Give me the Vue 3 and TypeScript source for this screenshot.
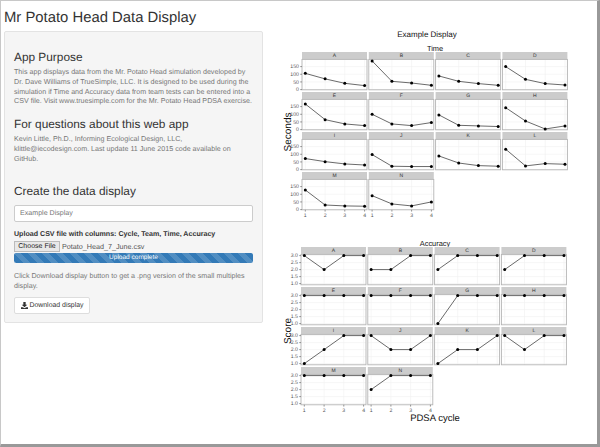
<script setup lang="ts">
interface Facet { name: string; values: number[] }
interface Chart {
  title: string
  yLabel: string
  labelY: number
  left: number
  top: number
  ticks: number[]
  tickFmt: (v: number) => string
  yZero: number
  yScale: number
  facets: Facet[]
}

const names = 'ABCDEFGHIJKLMN'.split('')
const timeData = [
  [106, 70, 41, 26], [187, 54, 43, 28], [89, 54, 39, 28], [150, 67, 39, 30],
  [167, 65, 37, 26], [100, 37, 26, 46], [96, 28, 24, 20], [143, 56, 4, 24],
  [72, 52, 37, 30], [98, 22, 20, 20], [89, 43, 26, 22], [133, 24, 39, 35],
  [128, 30, 24, 22], [91, 37, 24, 50],
]
const accuracyData = [
  [3, 2, 3, 3], [2, 2, 3, 3], [2, 3, 3, 3], [2, 3, 3, 3],
  [3, 3, 3, 3], [3, 3, 3, 3], [1, 3, 3, 3], [3, 3, 3, 3],
  [1, 2, 3, 3], [3, 2, 2, 3], [1, 2, 2, 3], [3, 2, 3, 3],
  [3, 3, 3, 3], [2, 3, 3, 3],
]

const toFacets = (d: number[][]): Facet[] => d.map((values, i) => ({ name: names[i], values }))

const charts: Chart[] = [
  {
    title: 'Time', yLabel: 'Seconds', labelY: 132, left: 302, top: 52, ticks: [0, 50, 100, 150],
    tickFmt: (v) => String(v), yZero: 37.6, yScale: 0.1533, facets: toFacets(timeData),
  },
  {
    title: 'Accuracy', yLabel: 'Score', labelY: 331, left: 301, top: 247, ticks: [1, 1.5, 2, 2.5, 3],
    tickFmt: (v) => v.toFixed(1), yZero: 36.6, yScale: 14, facets: toFacets(accuracyData),
  },
]

const panelW = 65
const pitchX = 66.8
const pitchY = 40
const stripH = 7.4
const panelH = 30.4
const xs = [3.3, 23.1, 42.8, 62.6]

const col = (i: number) => i % 4
const row = (i: number) => Math.floor(i / 4)
const facetX = (c: Chart, i: number) => c.left + col(i) * pitchX
const facetY = (c: Chart, i: number) => c.top + row(i) * pitchY
const pointY = (c: Chart, v: number) => c.yZero - (c.title === 'Time' ? v : v - 1) * c.yScale
const linePoints = (c: Chart, f: Facet) =>
  f.values.map((v, k) => `${xs[k]},${pointY(c, v)}`).join(' ')
const hasXTicks = (i: number) => i >= 12
const isLeft = (i: number) => i % 4 === 0
const minor = (c: Chart) => c.ticks.map((t) => pointY(c, t))
</script>

<template>
  <div class="frame">
    <div class="page">
      <h1 class="title">Mr Potato Head Data Display</h1>
      <div class="columns">
        <aside class="well">
          <h3 class="h3 first">App Purpose</h3>
          <p class="text">
            This app displays data from the Mr. Potato Head simulation developed by<br />
            Dr. Dave Williams of TrueSimple, LLC. It is designed to be used during the<br />
            simulation if Time and Accuracy data from team tests can be entered into a<br />
            CSV file. Visit www.truesimple.com for the Mr. Potato Head PDSA exercise.
          </p>
          <h3 class="h3 second">For questions about this web app</h3>
          <p class="text">
            Kevin Little, Ph.D., Informing Ecological Design, LLC,<br />
            klittle@iecodesign.com. Last update 11 June 2015 code available on<br />
            GitHub.
          </p>
          <h3 class="h3 third">Create the data display</h3>
          <div class="input">Example Display</div>
          <label class="label">Upload CSV file with columns: Cycle, Team, Time, Accuracy</label>
          <div class="file">
            <span class="choose">Choose File</span>
            <span class="filename">Potato_Head_7_June.csv</span>
          </div>
          <div class="progress">Upload complete</div>
          <p class="text hint">
            Click Download display button to get a .png version of the small multiples<br />
            display.
          </p>
          <div class="btn">
            <svg class="dl" viewBox="0 0 12 12" width="7" height="7">
              <path d="M4 0h4v4.5h2.8L6 9 1.2 4.5H4z" fill="#333" />
              <path d="M0 9h3l3 1.6L9 9h3v3H0z" fill="#333" />
            </svg>
            <span>Download display</span>
          </div>
        </aside>

        <svg class="plots" viewBox="270 20 327 410" width="327" height="410">
          <text x="427" y="37" class="main">Example Display</text>
          <g v-for="c in charts" :key="c.title">
            <text x="435" :y="c.top - 0.9" class="sub">{{ c.title }}</text>
            <text
              class="axis y-axis"
              :transform="`translate(290.5 ${c.labelY}) rotate(-90)`"
            >{{ c.yLabel }}</text>
            <g
              v-for="(f, i) in c.facets"
              :key="f.name"
              :transform="`translate(${facetX(c, i)} ${facetY(c, i)})`"
            >
              <rect :width="panelW" :height="stripH" class="strip" />
              <text :x="panelW / 2" y="5.3" class="strip-label">{{ f.name }}</text>
              <g :transform="`translate(0 ${stripH})`">
                <rect :width="panelW" :height="panelH" fill="#fff" />
                <line
                  v-for="y in minor(c)"
                  :key="y"
                  x1="0"
                  :x2="panelW"
                  :y1="y - stripH"
                  :y2="y - stripH"
                  class="grid"
                />
                <line
                  v-for="x in xs"
                  :key="x"
                  :x1="x"
                  :x2="x"
                  y1="0"
                  :y2="panelH"
                  class="grid"
                />
                <rect :width="panelW" :height="panelH" class="border" />
                <g :transform="`translate(0 ${-stripH})`">
                  <polyline :points="linePoints(c, f)" class="series" />
                  <circle
                    v-for="(v, k) in f.values"
                    :key="k"
                    :cx="xs[k]"
                    :cy="pointY(c, v)"
                    r="1.5"
                    fill="#000"
                  />
                  <template v-if="isLeft(i)">
                    <g v-for="t in c.ticks" :key="t">
                      <line x1="-1.8" x2="0" :y1="pointY(c, t)" :y2="pointY(c, t)" class="tick" />
                      <text x="-3" :y="pointY(c, t) + 1.8" class="tick-label end">{{ c.tickFmt(t) }}</text>
                    </g>
                  </template>
                  <template v-if="hasXTicks(i)">
                    <g v-for="(x, k) in xs" :key="x">
                      <line :x1="x" :x2="x" :y1="stripH + panelH" :y2="stripH + panelH + 1.8" class="tick" />
                      <text :x="x" :y="stripH + panelH + 7.4" class="tick-label mid">{{ k + 1 }}</text>
                    </g>
                  </template>
                </g>
              </g>
            </g>
          </g>
          <text x="435" y="421" class="axis">PDSA cycle</text>
        </svg>
      </div>
    </div>
  </div>
</template>

<style>
html, body { margin: 0; background: #fff; }
</style>

<style scoped>
.frame {
  width: 600px;
  height: 447px;
  box-sizing: border-box;
  border-top: 1px solid #c8c8c8;
  border-left: 1px solid #c8c8c8;
  border-right: 3px solid #999;
  border-bottom: 3px solid #999;
  overflow: hidden;
  background: #fff;
  font-family: "Liberation Sans", Arial, sans-serif;
  text-rendering: geometricPrecision;
  color: #333;
}
.page { padding: 0 0 0 3px; }
.title {
  margin: 0;
  padding-top: 9px;
  font-size: 14.85px;
  line-height: 17px;
  font-weight: 400;
  height: 21px;
  color: #333;
}
.columns { display: flex; align-items: flex-start; }
.well {
  width: 259px;
  height: 292px;
  flex: none;
  box-sizing: border-box;
  padding: 18px 9px 0;
  background: #f5f5f5;
  border: 1px solid #e3e3e3;
  border-radius: 2px;
}
.h3 { margin: 0; font-weight: 400; font-size: 11.85px; line-height: 14px; color: #333; }
.second { margin-top: 10px; }
.third { margin-top: 19.75px; }
.text {
  margin: 4px 0 0;
  font-size: 7.15px;
  line-height: 9.75px;
  white-space: nowrap;
  color: #777;
}
.input {
  margin-top: 7px;
  height: 17px;
  box-sizing: border-box;
  padding: 0 5px;
  background: #fff;
  border: 1px solid #ccc;
  border-radius: 2px;
  font-size: 7.1px;
  line-height: 15px;
  color: #777;
}
.label { display: block; margin-top: 7px; font-size: 7.1px; line-height: 10px; font-weight: 700; color: #333; }
.file { display: flex; align-items: center; margin-top: 2px; height: 11px; }
.choose {
  box-sizing: border-box;
  width: 46px;
  height: 11px;
  background: #e8e8e8;
  border: 1px solid #bbb;
  font-size: 7px;
  line-height: 9px;
  text-align: center;
  color: #222;
}
.filename { margin-left: 2px; font-size: 7.2px; color: #555; }
.progress {
  margin-top: 0.7px;
  height: 10px;
  border-radius: 2px;
  background-color: #337ab7;
  background-image: linear-gradient(45deg, rgba(255,255,255,.15) 25%, transparent 25%, transparent 50%, rgba(255,255,255,.15) 50%, rgba(255,255,255,.15) 75%, transparent 75%, transparent);
  background-size: 14px 14px;
  font-size: 6.5px;
  line-height: 10px;
  text-align: center;
  color: #fff;
}
.text.hint { margin-top: 9.3px; }
.btn {
  display: flex;
  align-items: center;
  gap: 1.5px;
  margin-top: 5.5px;
  box-sizing: border-box;
  height: 17px;
  width: 76px;
  padding: 0 6px;
  background: #fff;
  border: 1px solid #ddd;
  border-radius: 2px;
  font-size: 6.9px;
  white-space: nowrap;
  color: #333;
}
.dl { flex: none; }
.plots { flex: none; margin-left: 7px; margin-top: -11px; display: block; }
.main { font-size: 8px; text-anchor: middle; fill: #111; }
.sub { font-size: 7.4px; text-anchor: middle; fill: #111; }
.axis { font-size: 9.5px; text-anchor: middle; fill: #111; }
.y-axis { font-size: 10px; }
.strip { fill: #ccc; }
.strip-label { font-size: 5px; text-anchor: middle; fill: #333; }
.grid { stroke: #f0f0f0; stroke-width: 0.6; }
.border { fill: none; stroke: #b4b4b4; stroke-width: 0.9; }
.series { fill: none; stroke: #444; stroke-width: 0.8; }
.tick { stroke: #555; stroke-width: 0.6; }
.tick-label { font-size: 5.2px; fill: #555; }
.end { text-anchor: end; }
.mid { text-anchor: middle; }
</style>
